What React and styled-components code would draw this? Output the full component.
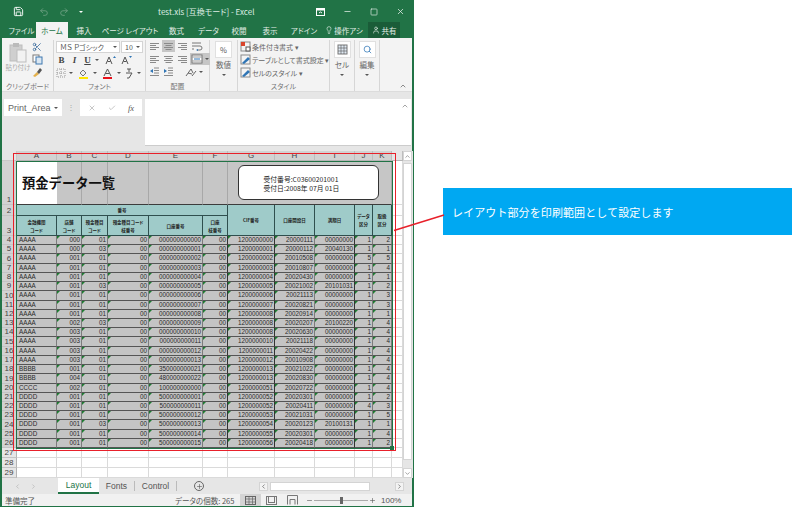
import styled, { createGlobalStyle } from "styled-components";
import { Save, Undo2, Redo2, Minus, Square, X, Lightbulb, User, Scissors, Check, Plus, ChevronLeft, ChevronRight, ChevronUp, ChevronDown, Search } from "lucide-react";

const JP = `"Noto Sans CJK JP", "Liberation Sans", sans-serif`;
const LATIN = `"Liberation Sans", "Noto Sans CJK JP", sans-serif`;
const GREEN = "#217346";

const columns = ["A", "B", "C", "D", "E", "F", "G", "H", "I", "J", "K"];
const columnWidths = [40, 25, 26, 41, 54, 25, 47, 40, 40, 18, 19];

const records = [
  "AAAA 000 01 00 000000000000 00 1200000000 20000111 00000000 1 2",
  "AAAA 000 03 00 000000000001 00 1200000001 20000112 20040130 1 1",
  "AAAA 001 01 00 000000000002 00 1200000002 20010508 00000000 5 5",
  "AAAA 001 01 00 000000000003 00 1200000003 20010807 00000000 1 4",
  "AAAA 001 01 00 000000000004 00 1200000004 20020430 00000000 1 1",
  "AAAA 001 03 00 000000000005 00 1200000005 20021002 20101031 1 2",
  "AAAA 001 01 00 000000000006 00 1200000006 20021113 00000000 1 3",
  "AAAA 001 01 00 000000000007 00 1200000007 20020821 00000000 1 3",
  "AAAA 001 01 00 000000000008 00 1200000008 20020914 00000000 1 1",
  "AAAA 002 03 00 000000000009 00 1200000008 20020207 20100220 1 4",
  "AAAA 003 01 00 000000000010 00 1200000008 20020630 00000000 1 4",
  "AAAA 003 01 00 000000000011 00 1200000010 20021118 00000000 1 4",
  "AAAA 003 01 00 000000000012 00 1200000011 20020422 00000000 1 4",
  "AAAA 003 01 00 000000000013 00 1200000012 20010908 00000000 1 4",
  "BBBB 001 01 00 350000000021 00 1200000013 20021022 00000000 1 4",
  "BBBB 004 01 00 480000000022 00 1200000013 20020830 00000000 1 4",
  "CCCC 002 01 00 100000000000 00 1200000051 20020722 00000000 1 4",
  "DDDD 001 01 00 500000000001 00 1200000052 20020301 00000000 1 2",
  "DDDD 001 01 00 500000000011 00 1200000052 20020411 00000000 4 3",
  "DDDD 001 01 00 500000000012 00 1200000053 20021031 00000000 1 5",
  "DDDD 001 03 00 500000000013 00 1200000054 20020123 20100131 1 1",
  "DDDD 001 01 00 500000000014 00 1200000055 20020301 00000000 1 4",
  "DDDD 001 01 00 500000000015 00 1200000056 20020418 00000000 1 2",
].map((line) => line.split(" "));

const GlobalStyle = createGlobalStyle`
  html, body { margin: 0; padding: 0; background: #fff; }
  * { box-sizing: border-box; }
`;

const Page = styled.div`
  position: relative;
  width: 807px;
  height: 507px;
  display: flex;
  overflow: hidden;
  background: #fff;
  font-family: ${JP};
  font-feature-settings: "palt";
`;

const Window = styled.div`
  width: 414px;
  height: 507px;
  display: flex;
  flex-direction: column;
  border: solid ${GREEN};
  border-width: 1px 2px 1px 2px;
  background: #e6e6e6;
`;

const TitleBar = styled.div`
  height: 21px;
  display: flex;
  align-items: center;
  background: ${GREEN};
  color: #fff;
  padding-left: 11px;
`;

const QuickIcon = styled.span`
  display: flex;
  width: ${({ $w }) => $w || 20}px;
  color: ${({ $dim }) => ($dim ? "#6fa184" : "#fff")};
  align-items: center;
`;

const WindowTitle = styled.div`
  margin-left: 69px;
  font-size: 8px;
  color: #dfeee5;
  white-space: nowrap;
`;

const WindowButtons = styled.div`
  margin-left: auto;
  display: flex;
  align-items: center;
  gap: 18px;
  padding-right: 7px;
  color: #e4efe8;
`;

const TabBar = styled.div`
  height: 16px;
  display: flex;
  align-items: stretch;
  background: ${GREEN};
  font-size: 7.5px;
  color: #e3eee7;
  padding-left: 5px;
`;

const RibbonTab = styled.div`
  width: ${({ $w }) => $w}px;
  display: flex;
  align-items: center;
  justify-content: center;
  gap: 1px;
  white-space: nowrap;
  background: ${({ $active }) => ($active ? "#f3f3f3" : "transparent")};
  color: ${({ $active }) => ($active ? GREEN : "inherit")};
`;

const ShareTab = styled(RibbonTab)`
  margin-left: 2px;
  background: #1a5c38;
  gap: 2px;
`;

const Ribbon = styled.div`
  height: 54px;
  display: flex;
  position: relative;
  background: #f3f3f3;
  border-bottom: 1px solid #dcdcdc;
  color: #444;
`;

const Group = styled.div`
  width: ${({ $w }) => $w}px;
  flex: none;
  display: flex;
  flex-direction: column;
  border-right: 1px solid #d6d6d6;
  margin-top: 2px;
`;

const GroupBody = styled.div`
  flex: 1;
  display: flex;
  padding: ${({ $pad }) => $pad || "0 2px"};
  min-height: 0;
`;

const GroupLabel = styled.div`
  height: 9px;
  font-size: 7px;
  line-height: 9px;
  text-align: center;
  color: #777;
  white-space: nowrap;
`;

const PasteColumn = styled.div`
  width: 28px;
  display: flex;
  flex-direction: column;
  align-items: center;
  padding-top: 2px;
  color: #aaa;
  font-size: 6.5px;
  line-height: 8px;
  white-space: nowrap;
`;

const SmallColumn = styled.div`
  display: flex;
  flex-direction: column;
  gap: 2px;
  padding-top: 2px;
`;

const ToolRows = styled.div`
  display: flex;
  flex-direction: column;
  gap: 1px;
`;

const ToolRow = styled.div`
  height: 12px;
  display: flex;
  align-items: center;
  gap: ${({ $gap }) => $gap ?? 3}px;
  font-size: 8px;
`;

const Combo = styled.div`
  width: ${({ $w }) => $w}px;
  height: 12px;
  background: #fff;
  border: 1px solid #d4d4d4;
  display: flex;
  align-items: center;
  justify-content: space-between;
  padding: 0 2px 0 3px;
  font-size: 7px;
  white-space: nowrap;
  color: #555;
`;

const Caret = styled.span`
  width: 0;
  height: 0;
  border-left: 2px solid transparent;
  border-right: 2px solid transparent;
  border-top: 2px solid ${({ $light }) => ($light ? "#fff" : "#555")};
  flex: none;
`;

const TallCaret = styled(Caret)`
  margin-top: 5px;
`;

const Letter = styled.span`
  width: 11px;
  text-align: center;
  font-family: "Liberation Serif", serif;
  font-size: 9px;
  font-weight: 700;
  font-style: ${({ $italic }) => ($italic ? "italic" : "normal")};
  text-decoration: ${({ $under }) => ($under ? "underline" : "none")};
  color: #444;
`;

const ToolBox = styled.span`
  width: ${({ $w }) => $w || 13}px;
  height: 12px;
  display: flex;
  align-items: center;
  justify-content: center;
  gap: 2px;
  background: ${({ $on }) => ($on ? "#c6c6c6" : "transparent")};
`;

const TallGroup = styled(GroupBody)`
  flex-direction: column;
  align-items: center;
  font-size: 7.5px;
  line-height: 8px;
  color: #666;
  padding: 1px 0 0;
`;

const BigButton = styled.div`
  width: 17px;
  height: 17px;
  background: #fff;
  border: 1px solid #e0e0e0;
  display: flex;
  align-items: center;
  justify-content: center;
  font-size: 7.5px;
  color: #555;
  margin-bottom: 3px;
`;

const StyleRows = styled.div`
  display: flex;
  flex-direction: column;
  padding-left: 2px;
`;

const StyleRow = styled.div`
  height: 13px;
  display: flex;
  align-items: center;
  gap: 1px;
  font-size: 7px;
  white-space: nowrap;
  color: #666;
`;

const Collapse = styled.span`
  position: absolute;
  right: 5px;
  bottom: 1px;
  color: #555;
  display: flex;
`;

const FormulaArea = styled.div`
  height: 57px;
  display: flex;
  align-items: flex-start;
  padding: 7px 1px 0 2px;
  background: #e6e6e6;
`;

const NameBox = styled.div`
  width: 58px;
  height: 17px;
  background: #fff;
  display: flex;
  align-items: center;
  justify-content: space-between;
  padding: 0 4px;
  font-family: ${LATIN};
  font-size: 9px;
  color: #666;
`;

const Grip = styled.span`
  width: 18px;
  text-align: center;
  color: #aaa;
  font-size: 8px;
  line-height: 17px;
  font-family: ${LATIN};
`;

const FormulaButtons = styled.div`
  width: 62px;
  height: 17px;
  background: #fff;
  display: flex;
  align-items: center;
  justify-content: space-around;
  color: #aaa;
  padding: 0 2px;
`;

const Fx = styled.span`
  font-family: "Liberation Serif", serif;
  font-style: italic;
  font-size: 8.5px;
  color: #555;
`;

const FormulaInput = styled.div`
  flex: 1;
  margin-left: 3px;
  height: 47px;
  background: #fff;
  border-bottom: 1px solid #ccc;
  display: flex;
  justify-content: flex-end;
  padding: 3px 2px 0 0;
  color: #777;
`;

const SheetArea = styled.div`
  position: relative;
  height: 329px;
  padding-top: 2px;
  display: flex;
  background: #e6e6e6;
`;

const Sheet = styled.div`
  display: grid;
  grid-template-columns: 15px ${columnWidths.map((w) => `${w}px`).join(" ")} 11px;
  grid-template-rows: 10px 44px 11px 20px repeat(23, 9.22px) repeat(3, 10px);
  width: 401px;
  font-family: ${LATIN};
`;

const Corner = styled.div`
  background: #e6e6e6;
  border-right: 1px solid #c8c8c8;
  border-bottom: 1px solid #c8c8c8;
`;

const ColHead = styled.div`
  background: ${({ $selected }) => ($selected ? "#d2d2d2" : "#e6e6e6")};
  border-right: 1px solid #bdbdbd;
  border-bottom: 1px solid #b4b4b4;
  font-size: 8px;
  line-height: 9px;
  text-align: center;
  color: #444;
`;

const RowHead = styled.div`
  background: ${({ $selected }) => ($selected ? "#d2d2d2" : "#e6e6e6")};
  border-right: 1px solid #b4b4b4;
  border-bottom: 1px solid #c4c4c4;
  font-size: 8px;
  display: flex;
  align-items: flex-end;
  justify-content: center;
  line-height: 8px;
  color: #444;
`;

const BlankCell = styled.div`
  background: ${({ $gray }) => ($gray ? "#c6c6c6" : "#fff")};
  border-right: 1px solid ${({ $gray }) => ($gray ? "#a8a8a8" : "#dadada")};
  border-bottom: 1px solid ${({ $gray }) => ($gray ? "#3c3c3c" : "#dadada")};
`;

const TitleCell = styled(BlankCell)`
  position: relative;
  border-right: 0;
  border-bottom-color: #3c3c3c;
`;

const SheetTitle = styled.h1`
  position: absolute;
  left: 5px;
  top: 13px;
  margin: 0;
  z-index: 1;
  font-family: ${JP};
  font-size: 13.3px;
  line-height: 17px;
  font-weight: 700;
  color: #111;
  white-space: nowrap;
  font-feature-settings: normal;
`;

const InfoCell = styled(BlankCell)`
  grid-column: span 5;
  display: flex;
  align-items: center;
  justify-content: center;
  padding-right: 3px;
`;

const InfoBox = styled.div`
  width: 141px;
  height: 35px;
  background: #fff;
  border: 1px solid #333;
  border-radius: 6px;
  font-family: ${JP};
  font-size: 6.8px;
  line-height: 8.5px;
  color: #222;
  padding: 9px 0 0 25px;
  white-space: nowrap;
`;

const HeaderCell = styled.div`
  grid-column: ${({ $span }) => ($span ? `span ${$span}` : "auto")};
  grid-row: ${({ $rows }) => ($rows ? `span ${$rows}` : "auto")};
  background: #9fcbc9;
  border-right: 1px solid #2f4f4e;
  border-bottom: 1px solid #2f4f4e;
  display: flex;
  align-items: center;
  justify-content: center;
  text-align: center;
  font-family: ${JP};
  font-size: 4.5px;
  font-weight: 700;
  line-height: 8px;
  color: #222;
`;

const DataCell = styled.div`
  position: relative;
  background: #c4c4c4;
  border-right: 1px solid ${({ $strong }) => ($strong ? "#333" : "#7c7c7c")};
  border-bottom: 1px solid #555;
  font-size: 6.3px;
  line-height: 8px;
  text-align: ${({ $left }) => ($left ? "left" : "right")};
  padding: 0 1px 0 2px;
  color: #2a2a2a;
  white-space: nowrap;

  &::before {
    content: "";
    display: ${({ $left }) => ($left ? "none" : "block")};
    position: absolute;
    left: 0;
    top: 0;
    border-top: 3.5px solid #1c7a30;
    border-right: 3.5px solid transparent;
  }
`;

const VScroll = styled.div`
  flex: 1;
  background: #e6e6e6;
  display: flex;
  flex-direction: column;
  padding-right: 1px;
  color: #666;
`;

const ScrollEnd = styled.div`
  height: 10px;
  background: #fff;
  border: 1px solid #d4d4d4;
  display: flex;
  align-items: center;
  justify-content: center;
  flex: none;
`;

const VThumb = styled.div`
  height: 297px;
  background: #fff;
  border: 1px solid #d4d4d4;
  margin: 2px 0 8px;
  flex: none;
`;

const RedFrame = styled.div`
  position: absolute;
  left: 11px;
  top: 4px;
  width: 383px;
  height: 298px;
  border: 1.5px solid #e8202a;
  pointer-events: none;
`;

const Selection = styled.div`
  position: absolute;
  left: 14px;
  top: 12px;
  width: 377px;
  height: 288px;
  border: 1.5px solid ${GREEN};
  pointer-events: none;

  &::after {
    content: "";
    position: absolute;
    right: -2px;
    bottom: -2px;
    width: 4px;
    height: 4px;
    background: ${GREEN};
  }
`;

const SheetTabs = styled.div`
  height: 16px;
  display: flex;
  align-items: stretch;
  background: #e6e6e6;
  font-family: ${LATIN};
  font-size: 8.5px;
  color: #555;
`;

const TabNav = styled.div`
  width: 56px;
  display: flex;
  gap: 9px;
  align-items: center;
  padding-left: 12px;
  color: #aaa;
`;

const SheetTab = styled.div`
  width: ${({ $w }) => $w}px;
  display: flex;
  align-items: center;
  justify-content: center;
  background: ${({ $active }) => ($active ? "#fff" : "transparent")};
  color: ${({ $active }) => ($active ? GREEN : "#555")};
  border-bottom: ${({ $active }) => ($active ? `2px solid ${GREEN}` : "0")};
  border-right: ${({ $active }) => ($active ? "0" : "1px solid #bbb")};
  margin: ${({ $active }) => ($active ? "0" : "3px 0")};
`;

const AddTab = styled.div`
  width: 10px;
  height: 10px;
  margin: 3px 0 0 17px;
  border: 1px solid #666;
  border-radius: 50%;
  display: flex;
  align-items: center;
  justify-content: center;
  color: #555;
`;

const HScroll = styled.div`
  margin-left: auto;
  width: 145px;
  display: flex;
  align-items: center;
  gap: 2px;
  margin-right: 8px;
  color: #444;
`;

const HEnd = styled.div`
  width: ${({ $w }) => $w || 9}px;
  height: 9px;
  background: ${({ $thumb }) => ($thumb ? "#fff" : "#f3f3f3")};
  border: 1px solid #d4d4d4;
  display: flex;
  align-items: center;
  justify-content: center;
`;

const HGap = styled.div`
  flex: 1;
`;

const StatusBar = styled.div`
  flex: 1;
  display: flex;
  align-items: center;
  background: #f1f1f1;
  font-size: 7.5px;
  color: #555;
  padding-left: 3px;
`;

const StatusLabel = styled.span`
  width: 170px;
`;

const StatusCount = styled.span`
  width: 65px;
  white-space: nowrap;
`;

const ViewButton = styled.span`
  width: 21px;
  height: 100%;
  display: flex;
  align-items: center;
  justify-content: center;
  background: ${({ $on }) => ($on ? "#d4d4d4" : "transparent")};
  color: #666;
`;

const ZoomSlider = styled.div`
  display: flex;
  align-items: center;
  margin-left: 3px;
  gap: 1px;
  color: #555;
`;

const ZoomTrack = styled.div`
  position: relative;
  width: 54px;
  height: 1px;
  background: #aaa;

  &::after {
    content: "";
    position: absolute;
    left: 26px;
    top: -3px;
    width: 3px;
    height: 7px;
    background: #666;
  }
`;

const ZoomValue = styled.span`
  margin-left: 5px;
  font-family: ${LATIN};
  font-size: 8px;
`;

const Callout = styled.div`
  width: 349px;
  height: 47px;
  margin: 188px 0 0 29px;
  background: #00a8f2;
  display: flex;
  align-items: center;
  padding-left: 9px;
  color: #fff;
  font-size: 11px;
  letter-spacing: 0.1px;
  white-space: nowrap;
  font-feature-settings: normal;
`;

const Leader = styled.svg`
  position: absolute;
  left: 390px;
  top: 210px;
  pointer-events: none;
`;

/* ribbon drawings */
const Lines = ({ align = "left" }) => {
  const rows = [0, 1, 2, 3].map((i) => {
    const w = i % 2 ? 6 : 9;
    const x = align === "left" ? 1 : align === "center" ? (11 - w) / 2 : 10 - w;
    return <rect key={i} x={x} y={2 + i * 2} width={w} height="1" fill="#8a8a8a" />;
  });
  return <svg width="11" height="11">{rows}</svg>;
};

const PasteIcon = () => (
  <svg width="18" height="21" viewBox="0 0 18 21">
    <rect x="1" y="3" width="12" height="16" fill="#cfcfcf" stroke="#bdbdbd" />
    <rect x="4" y="1" width="6" height="4" fill="#bbb" />
    <rect x="8" y="8" width="9" height="12" fill="#f2f2f2" stroke="#bdbdbd" />
  </svg>
);

const CopyIcon = () => (
  <svg width="11" height="11" viewBox="0 0 11 11">
    <rect x="1" y="1" width="6" height="7" fill="#fff" stroke="#7a7a7a" />
    <rect x="4" y="3" width="6" height="7" fill="#dbe7f2" stroke="#3f78b0" />
  </svg>
);

const BrushIcon = () => (
  <svg width="11" height="11" viewBox="0 0 11 11">
    <path d="M1 9 L5 5 L7 7 L3 10 Z" fill="#e3b04b" />
    <path d="M5 5 L8 1 L10 3 L7 7 Z" fill="#555" />
  </svg>
);

const FontSizeIcon = ({ up }) => (
  <svg width="11" height="10" viewBox="0 0 11 10">
    <path d="M1 9 L4 2 L7 9 M2.5 6.5 H5.5" fill="none" stroke="#555" />
    <path d={up ? "M8 3 L9.5 1 L11 3 Z" : "M8 1 L9.5 3 L11 1 Z"} fill="#2f75b5" />
  </svg>
);

const BorderIcon = () => (
  <svg width="10" height="10" viewBox="0 0 10 10">
    <rect x="1" y="1" width="8" height="8" fill="none" stroke="#999" strokeDasharray="1 1" />
    <path d="M5 1 V9 M1 5 H9" stroke="#999" strokeDasharray="1 1" />
  </svg>
);

const FillIcon = () => (
  <svg width="11" height="11" viewBox="0 0 11 11">
    <path d="M2 5 L5 2 L8 5 L5 8 Z" fill="#eee" stroke="#777" />
    <rect x="1" y="9" width="9" height="2" fill="#ffe600" />
  </svg>
);

const FontColorIcon = () => (
  <svg width="11" height="11" viewBox="0 0 11 11">
    <path d="M2 8 L5.5 1 L9 8 M3.5 5.5 H7.5" fill="none" stroke="#555" />
    <rect x="1" y="9" width="9" height="2" fill="#e8101a" />
  </svg>
);

const PhoneticIcon = () => (
  <svg width="10" height="11" viewBox="0 0 10 11">
    <path d="M3 1 H7 M5 1 V4 M2 5 H8 L5 10 H3" fill="none" stroke="#555" />
  </svg>
);

const IndentIcon = ({ flip }) => (
  <svg width="11" height="10" viewBox="0 0 11 10">
    <path d="M5 1 H10 M5 3.5 H10 M5 6 H10 M1 8.5 H10" stroke="#8a8a8a" />
    <path d={flip ? "M1 2 L4 4 L1 6 Z" : "M4 2 L1 4 L4 6 Z"} fill="#2f75b5" />
  </svg>
);

const WrapIcon = () => (
  <svg width="12" height="11" viewBox="0 0 12 11">
    <path d="M1 2 H10 M1 5 H9 Q11 5 11 7 T9 9 H6 M1 8 H3" fill="none" stroke="#777" />
    <path d="M7 8 L5 9 L7 10 Z" fill="#2f75b5" />
  </svg>
);

const MergeIcon = () => (
  <svg width="12" height="10" viewBox="0 0 12 10">
    <rect x="1" y="1" width="10" height="8" fill="#fff" stroke="#777" />
    <path d="M1 3 H11 M1 7 H11" stroke="#999" />
    <path d="M3 5 H9" stroke="#2f75b5" />
  </svg>
);

const OrientIcon = () => (
  <svg width="12" height="11" viewBox="0 0 12 11">
    <path d="M1 9 L6 2 L8 6 M3 6 L7 7 M7 9 L11 4" fill="none" stroke="#666" />
  </svg>
);

const StyleIcon = ({ red }) => (
  <svg width="11" height="11" viewBox="0 0 11 11">
    <rect x="1" y="1" width="9" height="9" fill="#f4f4f4" stroke="#8a8a8a" />
    {red ? (
      <>
        <rect x="1" y="1" width="4" height="4" fill="#d9442c" />
        <rect x="6" y="6" width="4" height="4" fill="#fff" stroke="#555" />
      </>
    ) : (
      <path d="M2 9 L8 3 L10 5 L4 10 Z" fill="#2f75b5" />
    )}
  </svg>
);

const CellsIcon = () => (
  <svg width="11" height="11" viewBox="0 0 11 11">
    <rect x="1" y="1" width="9" height="9" fill="#dfe9f3" stroke="#777" />
    <path d="M1 4 H10 M1 7 H10 M4 1 V10 M7 1 V10" stroke="#555" strokeWidth="0.6" />
  </svg>
);

const ViewGrid = () => (
  <svg width="11" height="9" viewBox="0 0 11 9">
    <rect x="0.5" y="0.5" width="10" height="8" fill="none" stroke="#666" />
    <path d="M0 3 H11 M0 6 H11 M4 0 V9 M7.5 0 V9" stroke="#666" strokeWidth="0.7" />
  </svg>
);

const ViewPage = () => (
  <svg width="11" height="9" viewBox="0 0 11 9">
    <rect x="0.5" y="0.5" width="10" height="8" fill="none" stroke="#777" />
    <rect x="2.5" y="0.5" width="6" height="6" fill="none" stroke="#777" />
  </svg>
);

const ViewBreak = () => (
  <svg width="11" height="10" viewBox="0 0 11 10">
    <path d="M0.5 9.5 V0.5 H10.5 V9.5 M3 9.5 V4.5 H8 V9.5" fill="none" stroke="#777" />
  </svg>
);

const RibbonDisplayIcon = () => (
  <svg width="9" height="8" viewBox="0 0 9 8">
    <rect x="0.5" y="0.5" width="8" height="7" fill="none" stroke="#fff" />
    <rect x="0.5" y="0.5" width="8" height="2" fill="#fff" />
    <path d="M3 5 L4.5 4 L6 5" fill="none" stroke="#fff" />
  </svg>
);

const mainTabs = [
  ["ファイル", 29],
  ["ホーム", 32, true],
  ["挿入", 32],
  ["ページ レイアウト", 60],
  ["数式", 33],
  ["データ", 31],
  ["校閲", 30],
  ["表示", 32],
  ["アドイン", 36],
];

const isStrong = (index) => index === 5 || index === 6 || index === 8;

export default function App() {
  return (
    <Page>
      <GlobalStyle />
      <Window>
        <TitleBar>
          <QuickIcon $w={26}><Save size={11} /></QuickIcon>
          <QuickIcon $w={20} $dim><Undo2 size={10} /></QuickIcon>
          <QuickIcon $w={20} $dim><Redo2 size={10} /></QuickIcon>
          <QuickIcon $w={10}><Caret $light /></QuickIcon>
          <WindowTitle>test.xls [互換モード] - Excel</WindowTitle>
          <WindowButtons>
            <RibbonDisplayIcon />
            <Minus size={9} />
            <Square size={8} />
            <X size={9} />
          </WindowButtons>
        </TitleBar>

        <TabBar>
          {mainTabs.map(([label, width, active]) => (
            <RibbonTab key={label} $w={width} $active={active}>{label}</RibbonTab>
          ))}
          <RibbonTab $w={44}><Lightbulb size={8} />操作アシ</RibbonTab>
          <ShareTab $w={32}><User size={8} />共有</ShareTab>
        </TabBar>

        <Ribbon>
          <Group $w={52}>
            <GroupBody>
              <PasteColumn>
                <PasteIcon />
                貼り付け
              </PasteColumn>
              <SmallColumn>
                <Scissors size={10} color="#3f6f9f" />
                <CopyIcon />
                <BrushIcon />
              </SmallColumn>
            </GroupBody>
            <GroupLabel>クリップボード</GroupLabel>
          </Group>

          <Group $w={92}>
            <GroupBody $pad="1px 2px">
              <ToolRows>
                <ToolRow $gap={1}>
                  <Combo $w={64}>ＭＳ Ｐゴシック<Caret /></Combo>
                  <Combo $w={22}>10<Caret /></Combo>
                </ToolRow>
                <ToolRow $gap={2}>
                  <Letter>B</Letter>
                  <Letter $italic>I</Letter>
                  <Letter $under>U</Letter>
                  <Caret />
                  <ToolBox $w={18}><FontSizeIcon up /></ToolBox>
                  <FontSizeIcon />
                </ToolRow>
                <ToolRow $gap={3}>
                  <BorderIcon />
                  <Caret />
                  <ToolBox $w={14}><FillIcon /></ToolBox>
                  <Caret />
                  <ToolBox $w={14}><FontColorIcon /></ToolBox>
                  <Caret />
                  <PhoneticIcon />
                  <Caret />
                </ToolRow>
              </ToolRows>
            </GroupBody>
            <GroupLabel>フォント</GroupLabel>
          </Group>

          <Group $w={64}>
            <GroupBody $pad="0 2px">
              <ToolRows>
                <ToolRow $gap={1}>
                  <ToolBox><Lines /></ToolBox>
                  <ToolBox $on><Lines align="center" /></ToolBox>
                  <ToolBox><Lines align="right" /></ToolBox>
                  <ToolBox><WrapIcon /></ToolBox>
                </ToolRow>
                <ToolRow $gap={1}>
                  <ToolBox><Lines /></ToolBox>
                  <ToolBox><Lines align="center" /></ToolBox>
                  <ToolBox><Lines align="right" /></ToolBox>
                  <ToolBox $w={20} $on><MergeIcon /><Caret /></ToolBox>
                </ToolRow>
                <ToolRow $gap={1}>
                  <ToolBox><IndentIcon /></ToolBox>
                  <ToolBox><IndentIcon flip /></ToolBox>
                  <ToolBox $w={8} />
                  <ToolBox $w={18}><OrientIcon /><Caret /></ToolBox>
                </ToolRow>
              </ToolRows>
            </GroupBody>
            <GroupLabel>配置</GroupLabel>
          </Group>

          <Group $w={28}>
            <TallGroup>
              <BigButton>%</BigButton>
              数値
              <TallCaret />
            </TallGroup>
          </Group>

          <Group $w={92}>
            <GroupBody $pad="0">
              <StyleRows>
                <StyleRow><StyleIcon red />条件付き書式 ▾</StyleRow>
                <StyleRow><StyleIcon />テーブルとして書式設定 ▾</StyleRow>
                <StyleRow><StyleIcon />セルのスタイル ▾</StyleRow>
              </StyleRows>
            </GroupBody>
            <GroupLabel>スタイル</GroupLabel>
          </Group>

          <Group $w={25}>
            <TallGroup>
              <BigButton><CellsIcon /></BigButton>
              セル
              <TallCaret />
            </TallGroup>
          </Group>

          <Group $w={25}>
            <TallGroup>
              <BigButton><Search size={9} color="#2f75b5" /></BigButton>
              編集
              <TallCaret />
            </TallGroup>
          </Group>

          <Collapse><ChevronUp size={8} /></Collapse>
        </Ribbon>

        <FormulaArea>
          <NameBox>Print_Area<Caret /></NameBox>
          <Grip>⋮</Grip>
          <FormulaButtons>
            <X size={8} />
            <Check size={8} />
            <Fx>fx</Fx>
          </FormulaButtons>
          <FormulaInput><ChevronUp size={8} /></FormulaInput>
        </FormulaArea>

        <SheetArea>
          <Sheet>
            <Corner />
            {columns.map((col) => (
              <ColHead key={col} $selected>{col}</ColHead>
            ))}
            <ColHead />

            <RowHead $selected>1</RowHead>
            <TitleCell>
              <SheetTitle>預金データ一覧</SheetTitle>
            </TitleCell>
            {[1, 2, 3, 4, 5].map((i) => <BlankCell key={i} $gray />)}
            <InfoCell $gray>
              <InfoBox>
                受付番号:C03600201001
                <br />
                受付日:2008年 07月 01日
              </InfoBox>
            </InfoCell>
            <BlankCell />

            <RowHead $selected>2</RowHead>
            <HeaderCell $span={6}>番号</HeaderCell>
            <HeaderCell $rows={2}>CIF番号</HeaderCell>
            <HeaderCell $rows={2}>口座開設日</HeaderCell>
            <HeaderCell $rows={2}>満期日</HeaderCell>
            <HeaderCell $rows={2}>データ<br />区分</HeaderCell>
            <HeaderCell $rows={2}>取扱<br />区分</HeaderCell>
            <BlankCell />

            <RowHead $selected>3</RowHead>
            <HeaderCell>金融機関<br />コード</HeaderCell>
            <HeaderCell>店舗<br />コード</HeaderCell>
            <HeaderCell>預金種目<br />コード</HeaderCell>
            <HeaderCell>預金種目コード<br />枝番号</HeaderCell>
            <HeaderCell>口座番号</HeaderCell>
            <HeaderCell>口座<br />枝番号</HeaderCell>
            <BlankCell />

            {records.map((record, rowIndex) => (
              <div key={rowIndex} style={{ display: "contents" }}>
                <RowHead $selected>{rowIndex + 4}</RowHead>
                {record.map((value, colIndex) => (
                  <DataCell key={colIndex} $left={colIndex === 0} $strong={isStrong(colIndex)}>{value}</DataCell>
                ))}
                <BlankCell />
              </div>
            ))}

            {[27, 28, 29].map((row) => (
              <div key={row} style={{ display: "contents" }}>
                <RowHead>{row}</RowHead>
                {columns.map((col) => <BlankCell key={col} />)}
                <BlankCell />
              </div>
            ))}
          </Sheet>

          <VScroll>
            <ScrollEnd><ChevronUp size={7} /></ScrollEnd>
            <VThumb />
            <ScrollEnd><ChevronDown size={7} /></ScrollEnd>
          </VScroll>

          <RedFrame />
          <Selection />
        </SheetArea>

        <SheetTabs>
          <TabNav>
            <ChevronLeft size={7} />
            <ChevronRight size={7} />
          </TabNav>
          <SheetTab $w={41} $active>Layout</SheetTab>
          <SheetTab $w={36}>Fonts</SheetTab>
          <SheetTab $w={42}>Control</SheetTab>
          <AddTab><Plus size={7} /></AddTab>
          <HScroll>
            <HEnd><ChevronLeft size={7} /></HEnd>
            <HEnd $w={100} $thumb />
            <HGap />
            <HEnd><ChevronRight size={7} /></HEnd>
          </HScroll>
        </SheetTabs>

        <StatusBar>
          <StatusLabel>準備完了</StatusLabel>
          <StatusCount>データの個数: 265</StatusCount>
          <ViewButton $on><ViewGrid /></ViewButton>
          <ViewButton><ViewPage /></ViewButton>
          <ViewButton><ViewBreak /></ViewButton>
          <ZoomSlider>
            <Minus size={7} />
            <ZoomTrack />
            <Plus size={7} />
          </ZoomSlider>
          <ZoomValue>100%</ZoomValue>
        </StatusBar>
      </Window>

      <Callout>レイアウト部分を印刷範囲として設定します</Callout>

      <Leader width="56" height="24" viewBox="0 0 56 24">
        <line x1="4" y1="20.5" x2="54" y2="5" stroke="#e8202a" strokeWidth="1.5" />
      </Leader>
    </Page>
  );
}
